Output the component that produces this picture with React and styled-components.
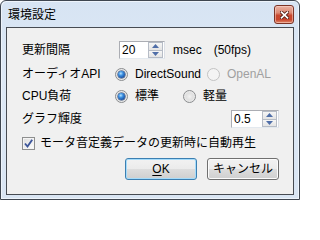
import React from 'react'
import styled, { createGlobalStyle } from 'styled-components'

const Global = createGlobalStyle`
    html, body {
        margin: 0;
        padding: 0;
        background: #ffffff;
    }
    body {
        font-family: "Liberation Sans", "Noto Sans CJK JP", sans-serif;
        font-size: 12px;
        color: #000000;
    }
`

function SpinEdit({ value, w, ml }) {
    return (
        <EditBox $w={w} $ml={ml}>
            <EditText>{value}</EditText>
            <Spin>
                <SpinHalf>
                    <svg width="7" height="4" viewBox="0 0 7 4"><path d="M0 4 L3.5 0 L7 4 Z" fill="#4f6ea8" /></svg>
                </SpinHalf>
                <SpinHalf $down>
                    <svg width="7" height="4" viewBox="0 0 7 4"><path d="M0 0 L3.5 4 L7 0 Z" fill="#4f6ea8" /></svg>
                </SpinHalf>
            </Spin>
        </EditBox>
    )
}

function Radio({ checked, disabled, w, children }) {
    return (
        <RadioOption $w={w}>
            <RadioDot $checked={checked} $disabled={disabled} />
            <OptText $disabled={disabled}>{children}</OptText>
        </RadioOption>
    )
}

function App() {
    return (
        <>
            <Global />
            <Window>
                <TitleBar>
                    <Title>環境設定</Title>
                    <CloseButton>
                        <svg width="9" height="8" viewBox="0 0 9 8">
                            <path d="M1.5 1.2 L7.5 6.8 M7.5 1.2 L1.5 6.8" stroke="#5a2118" strokeWidth="3.4" strokeLinecap="square" />
                            <path d="M1.5 1.2 L7.5 6.8 M7.5 1.2 L1.5 6.8" stroke="#ffffff" strokeWidth="1.6" strokeLinecap="square" />
                        </svg>
                    </CloseButton>
                </TitleBar>
                <Client>
                    <Row $mt={13}>
                        <Label>更新間隔</Label>
                        <SpinEdit value="20" w={46} ml={4} />
                        <Unit>msec　(50fps)</Unit>
                    </Row>
                    <Row $mt={6}>
                        <Label>オーディオAPI</Label>
                        <Radio checked w={92}>DirectSound</Radio>
                        <Radio disabled>OpenAL</Radio>
                    </Row>
                    <Row $mt={4}>
                        <Label>CPU負荷</Label>
                        <Radio checked w={68}>標準</Radio>
                        <Radio>軽量</Radio>
                    </Row>
                    <Row $mt={5}>
                        <Label>グラフ輝度</Label>
                        <SpinEdit value="0.5" w={48} ml={116} />
                    </Row>
                    <Row $mt={6}>
                        <CheckBox>
                            <svg width="11" height="11" viewBox="0 0 11 11">
                                <path d="M2 5.5 L4.5 8.5 L9.2 1.8" fill="none" stroke="#3d569a" strokeWidth="1.9" />
                            </svg>
                        </CheckBox>
                        <CheckText>モータ音定義データの更新時に自動再生</CheckText>
                    </Row>
                    <ButtonRow>
                        <Button $default><u>O</u>K</Button>
                        <Button>キャンセル</Button>
                    </ButtonRow>
                </Client>
            </Window>
        </>
    )
}

export default App

const Window = styled.div`
    box-sizing: border-box;
    width: 300px;
    height: 200px;
    border: 1px solid #3f4650;
    border-radius: 6px 6px 0 0;
    padding: 0 5px 4px;
    display: flex;
    flex-direction: column;
    background: linear-gradient(to bottom, #d7e4f3 0%, #dde8f5 40%, #d9e5f3 100%);
    box-shadow: inset 1px 1px 0 #eef4fb, inset -1px -1px 0 #eef4fb;
`

const TitleBar = styled.div`
    height: 26px;
    display: flex;
    align-items: flex-start;
    justify-content: space-between;
`

const Title = styled.div`
    margin: 7px 0 0 2px;
    font-size: 12px;
    line-height: 14px;
    color: #000000;
`

const CloseButton = styled.div`
    box-sizing: border-box;
    margin-top: 4px;
    width: 20px;
    height: 19px;
    border: 1px solid #7b3427;
    border-radius: 3px;
    display: flex;
    align-items: center;
    justify-content: center;
    background: linear-gradient(to bottom, #e9b2a4 0%, #dd8a74 40%, #c8472e 55%, #c8462d 80%, #e08a6c 100%);
    box-shadow: inset 0 0 0 1px rgba(255, 220, 210, 0.5);
`

const Client = styled.div`
    flex: 1;
    border: 1px solid #474b52;
    background: #f0f0f0;
    display: flex;
    flex-direction: column;
    padding: 0 14px 0 15px;
`

const Row = styled.div`
    height: 18px;
    margin-top: ${props => props.$mt}px;
    display: flex;
    align-items: center;
`

const Label = styled.div`
    width: 93px;
    flex-shrink: 0;
    line-height: 1;
    white-space: nowrap;
`

const EditBox = styled.div`
    box-sizing: border-box;
    width: ${props => props.$w}px;
    height: 18px;
    margin-left: ${props => props.$ml}px;
    background: #ffffff;
    border: 1px solid #abadb3;
    border-right-color: #dbdfe6;
    border-bottom-color: #e3e9ef;
    display: flex;
    align-items: stretch;
`

const EditText = styled.div`
    flex: 1;
    padding-left: 2px;
    display: flex;
    align-items: center;
    line-height: 1;
`

const Spin = styled.div`
    width: 15px;
    display: flex;
    flex-direction: column;
    margin: 0 1px 0 0;
`

const SpinHalf = styled.div`
    box-sizing: border-box;
    flex: 1;
    display: flex;
    align-items: center;
    justify-content: center;
    border: 1px solid #b6bcc6;
    border-top-width: ${props => props.$down ? '0' : '1px'};
    background: linear-gradient(to bottom, #f6f6f6 0%, #e4e4e4 100%);
`

const Unit = styled.div`
    margin-left: 8px;
    line-height: 1;
    white-space: nowrap;
`

const RadioOption = styled.div`
    width: ${props => props.$w ? props.$w + 'px' : 'auto'};
    display: flex;
    align-items: center;
`

const RadioDot = styled.div`
    box-sizing: border-box;
    width: 13px;
    height: 13px;
    border-radius: 50%;
    flex-shrink: 0;
    border: 1px solid ${props => props.$disabled ? '#c3c3c3' : '#8a8c8e'};
    background: ${props => props.$disabled
        ? '#f4f4f4'
        : 'radial-gradient(circle at 50% 50%, #f2f2f2 0%, #e0e0e0 45%, #f6f6f6 100%)'};
    display: flex;
    align-items: center;
    justify-content: center;
    &::after {
        content: '';
        display: ${props => props.$checked ? 'block' : 'none'};
        width: 7px;
        height: 7px;
        border-radius: 50%;
        background: radial-gradient(circle at 40% 35%, #b6e4ff 0%, #3a8ee0 35%, #1a4d9c 75%, #12336d 100%);
        box-shadow: 0 0 0 0.5px #1e3a6a;
    }
`

const OptText = styled.span`
    margin-left: 7px;
    line-height: 1;
    white-space: nowrap;
    color: ${props => props.$disabled ? '#a0a0a0' : '#000000'};
`

const CheckBox = styled.div`
    box-sizing: border-box;
    width: 13px;
    height: 13px;
    flex-shrink: 0;
    border: 1px solid #8e8f8f;
    background: linear-gradient(to bottom right, #dcdcdc 0%, #f4f4f4 70%, #ffffff 100%);
    box-shadow: inset 0 0 0 1px #f4f4f4;
    display: flex;
    align-items: center;
    justify-content: center;
`

const CheckText = styled.span`
    margin-left: 5px;
    line-height: 1;
    white-space: nowrap;
`

const ButtonRow = styled.div`
    margin-top: 6px;
    display: flex;
    justify-content: flex-end;
    gap: 10px;
`

const Button = styled.div`
    box-sizing: border-box;
    width: 72px;
    height: 22px;
    border-radius: 3px;
    border: 1px solid ${props => props.$default ? '#3c7fb1' : '#707070'};
    background: linear-gradient(to bottom, #f2f2f2 0%, #ebebeb 50%, #dddddd 51%, #cfcfcf 100%);
    box-shadow: inset 0 0 0 1px ${props => props.$default ? '#a5dcfb' : '#fcfcfc'};
    display: flex;
    align-items: center;
    justify-content: center;
    line-height: 1;
    u {
        text-underline-offset: 2px;
    }
`
